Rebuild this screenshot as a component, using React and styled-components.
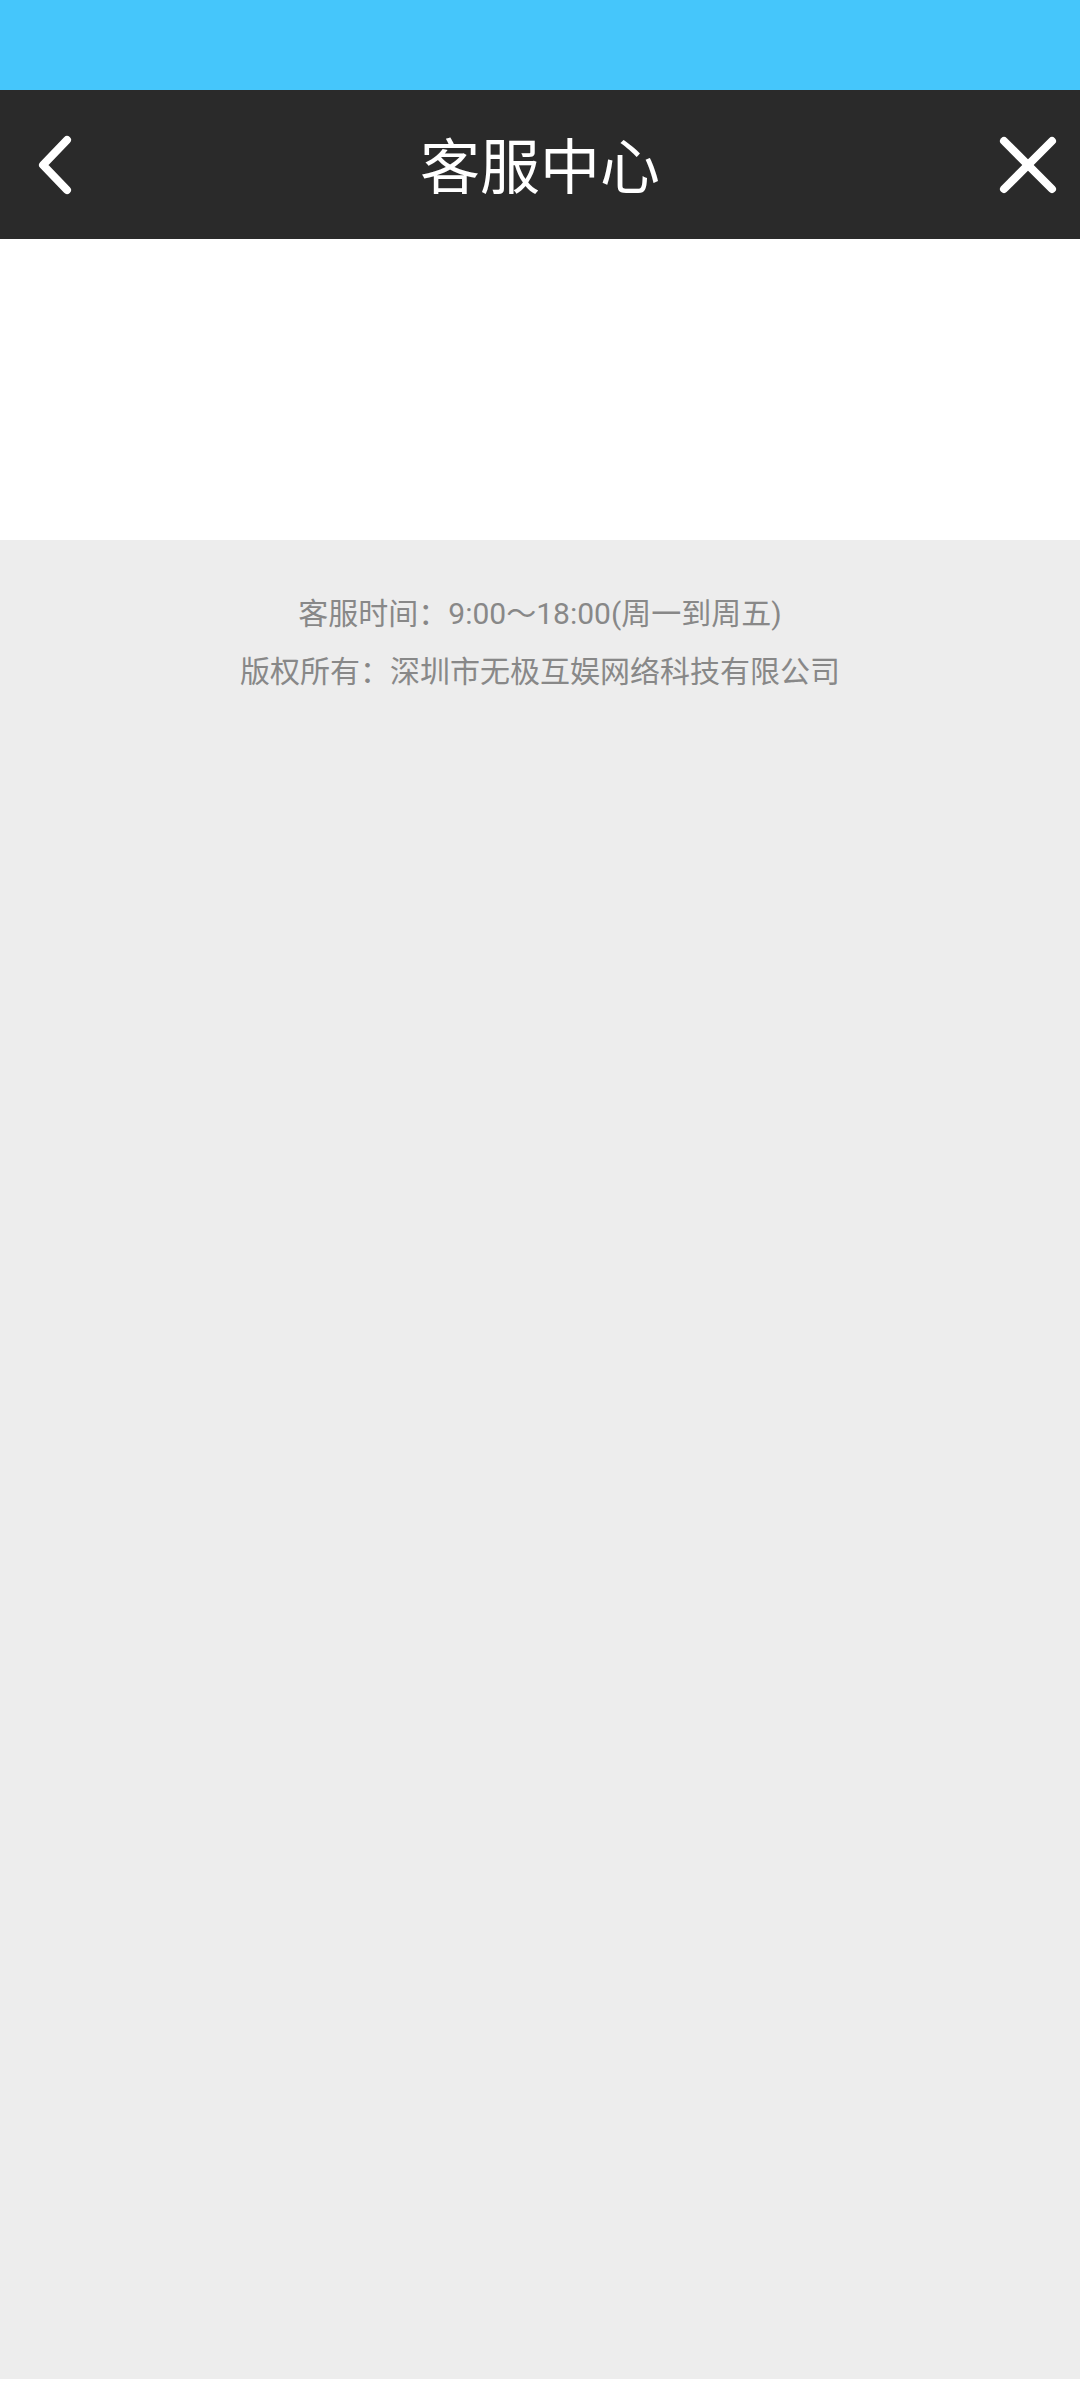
import React from "react";
import styled, { createGlobalStyle } from "styled-components";

const GlobalStyle = createGlobalStyle`
  html, body {
    margin: 0;
    padding: 0;
    background: #ffffff;
  }
  body {
    font-family: Roboto, "Noto Sans CJK SC", "Noto Sans", sans-serif;
  }
  * { box-sizing: border-box; }
`;

const Page = styled.div`
  width: 1080px;
  display: flex;
  flex-direction: column;
`;

const StatusBar = styled.div`
  height: 90px;
  background: #45c6fb;
`;

const NavBar = styled.header`
  height: 149px;
  background: #2a2a2a;
  display: flex;
  align-items: center;
`;

const NavButton = styled.button`
  width: 110px;
  height: 149px;
  padding: 0;
  border: none;
  background: transparent;
  display: flex;
  flex-shrink: 0;
`;

const Title = styled.h1`
  flex: 1;
  margin: 0;
  text-align: center;
  color: #ffffff;
  font-size: 60px;
  font-weight: 400;
  line-height: 1;
  font-family: "Noto Sans CJK SC", sans-serif;
  padding-bottom: 4px;
`;

const Content = styled.main`
  height: 301px;
  background: #ffffff;
`;

const Footer = styled.footer`
  height: 1839px;
  background: #ededed;
  padding-top: 45px;
  display: flex;
  flex-direction: column;
  align-items: center;
`;

const FooterLine = styled.p`
  margin: 0;
  font-size: 30px;
  line-height: 58px;
  color: #888888;
  font-family: Roboto, "Noto Sans CJK SC", sans-serif;
  white-space: nowrap;
`;

const BackIcon = () => (
  <svg width="110" height="149" viewBox="0 0 110 149">
    <polyline
      points="67,50 43,75 67,100"
      fill="none"
      stroke="#ffffff"
      strokeWidth="8"
      strokeLinecap="round"
      strokeLinejoin="round"
    />
  </svg>
);

const CloseIcon = () => (
  <svg width="110" height="149" viewBox="0 0 110 149">
    <g stroke="#ffffff" strokeWidth="8" strokeLinecap="round">
      <line x1="34" y1="51" x2="82" y2="99" />
      <line x1="82" y1="51" x2="34" y2="99" />
    </g>
  </svg>
);

export default function App() {
  return (
    <Page>
      <GlobalStyle />
      <StatusBar />
      <NavBar>
        <NavButton aria-label="返回">
          <BackIcon />
        </NavButton>
        <Title>客服中心</Title>
        <NavButton aria-label="关闭">
          <CloseIcon />
        </NavButton>
      </NavBar>
      <Content />
      <Footer>
        <FooterLine>客服时间：9:00～18:00(周一到周五)</FooterLine>
        <FooterLine>版权所有：深圳市无极互娱网络科技有限公司</FooterLine>
      </Footer>
    </Page>
  );
}
